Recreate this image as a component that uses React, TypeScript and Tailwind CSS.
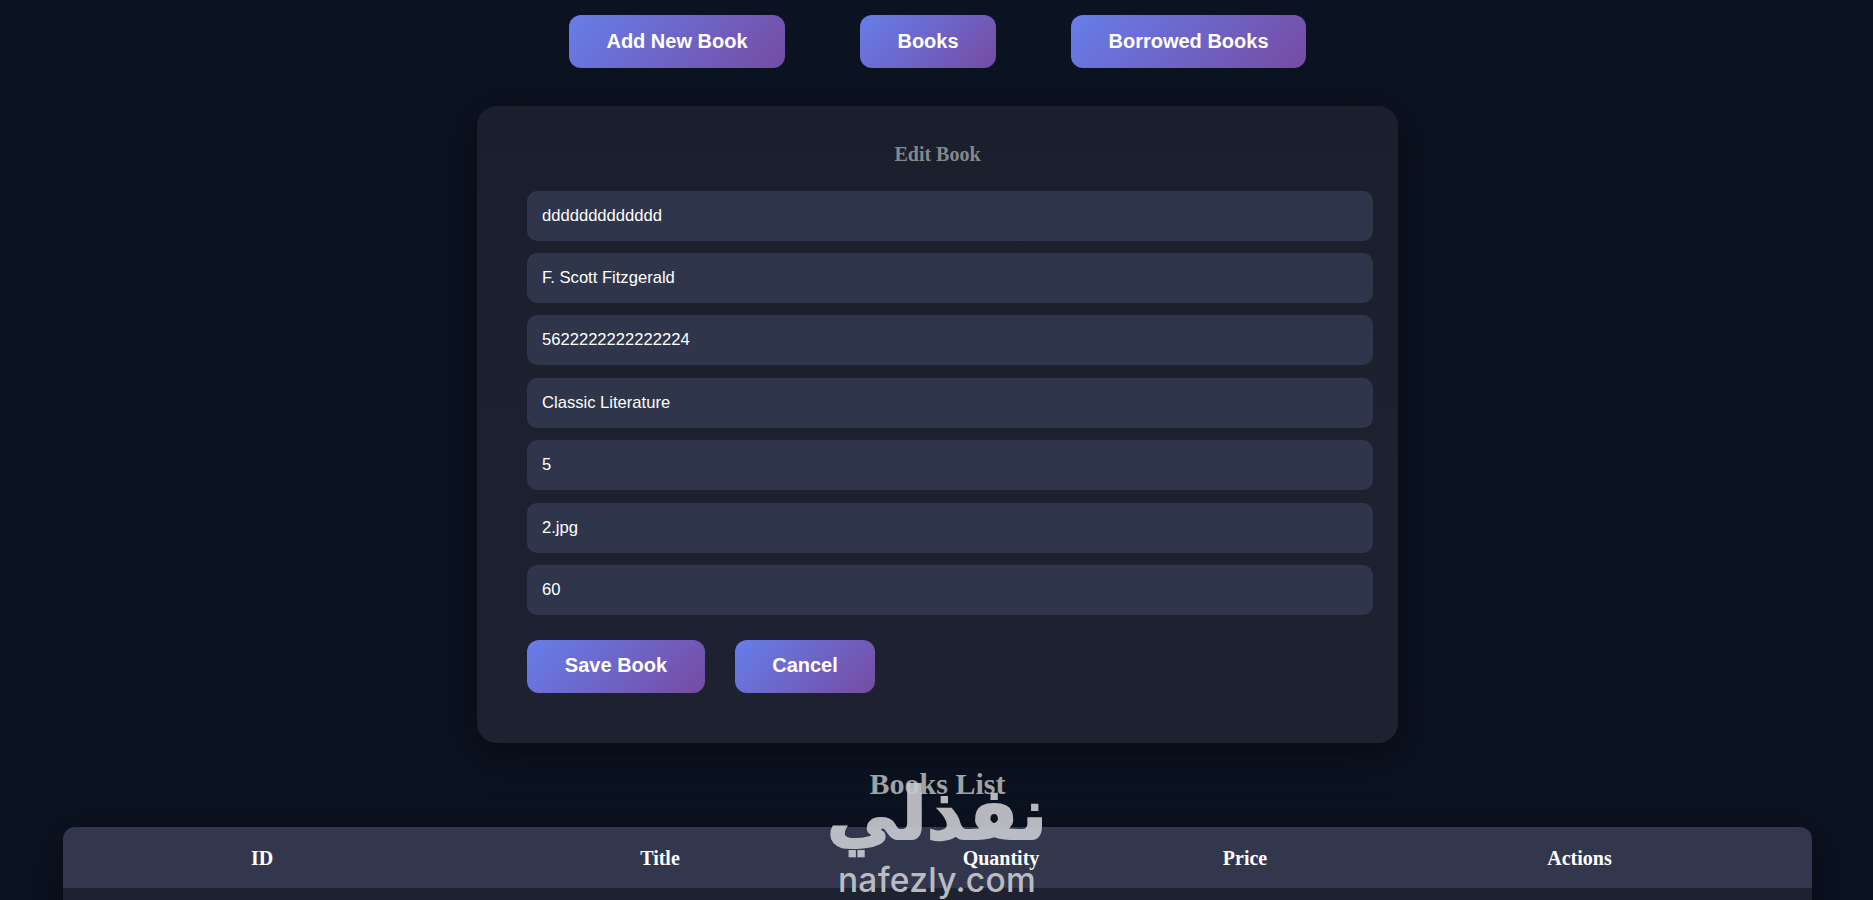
import React from "react";

const sans = "font-['Liberation_Sans',Arial,sans-serif]";
const serif = "font-['Liberation_Serif','Times_New_Roman',serif]";

function GradientButton({ label, width }: { label: string; width: string }) {
  return (
    <button
      className={`${width} h-[53px] rounded-[12px] bg-[linear-gradient(135deg,#667eea,#764ba2)] pb-[2px] text-[20px] font-bold text-white ${sans}`}
    >
      {label}
    </button>
  );
}

const values = [
  "ddddddddddddd",
  "F. Scott Fitzgerald",
  "5622222222222224",
  "Classic Literature",
  "5",
  "2.jpg",
  "60",
];

const columns = [
  { label: "ID", width: "w-[398px]" },
  { label: "Title", width: "w-[398px]" },
  { label: "Quantity", width: "w-[284px]" },
  { label: "Price", width: "w-[204px]" },
  { label: "Actions", width: "w-[465px]" },
];

function Watermark() {
  return (
    <div className="pointer-events-none absolute left-[817px] top-[780px] flex h-[120px] w-[240px] flex-col items-center text-[#c9cbd0] opacity-90">
      <div
        dir="rtl"
        className="h-[68px] whitespace-nowrap font-['DejaVu_Sans',sans-serif] text-[72px] font-bold leading-[68px] [-webkit-text-stroke:2px_#c9cbd0]"
      >
        نفذلي
      </div>
      <div className="mt-[12px] whitespace-nowrap font-['Inter',sans-serif] text-[33.5px] font-medium leading-[40px] tracking-[0.3px]">
        nafezly.com
      </div>
    </div>
  );
}

export default function App() {
  return (
    <div className="relative h-[900px] overflow-hidden bg-[#0b1220]">
      <nav className="flex justify-center gap-[75px] pl-[2px] pt-[15px]">
        <GradientButton label="Add New Book" width="w-[216px]" />
        <GradientButton label="Books" width="w-[136px]" />
        <GradientButton label="Borrowed Books" width="w-[235px]" />
      </nav>

      <section className="mx-auto mt-[38px] h-[637px] w-[921px] translate-x-[1px] rounded-[20px] bg-gradient-to-b from-[#1a1f2e] to-[#1e2130] px-[50px] pt-[38px] shadow-[0_10px_40px_rgba(0,0,0,0.4)]">
        <h2 className={`mb-[25.6px] text-center text-[20px] font-bold leading-[21px] text-[#85878c] ${serif}`}>
          Edit Book
        </h2>
        <div className="flex flex-col gap-[12.4px]">
          {values.map((v) => (
            <input
              key={v}
              readOnly
              defaultValue={v}
              className={`h-[50px] w-[846px] rounded-[10px] bg-[#2f354a] px-[15px] text-[16.6px] text-white outline-none ${sans}`}
            />
          ))}
        </div>
        <div className="mt-[25px] flex gap-[30px]">
          <GradientButton label="Save Book" width="w-[178px]" />
          <GradientButton label="Cancel" width="w-[140px]" />
        </div>
      </section>

      <h2 className={`mt-[24px] translate-x-[1px] text-center text-[30px] font-bold leading-[34px] text-[#a0a2a6] ${serif}`}>
        Books List
      </h2>

      <div className="ml-[63px] mt-[26px] w-[1749px] overflow-hidden rounded-[12px] shadow-[0_10px_40px_rgba(0,0,0,0.4)]">
        <table className={`w-full table-fixed border-collapse ${serif}`}>
          <thead>
            <tr className="h-[61px] bg-[#32374d]">
              {columns.map((c) => (
                <th key={c.label} className={`${c.width} text-center text-[20px] font-bold text-white`}>
                  {c.label}
                </th>
              ))}
            </tr>
          </thead>
          <tbody>
            <tr className="h-[60px] bg-[#1e2130]">
              <td colSpan={5} />
            </tr>
          </tbody>
        </table>
      </div>

      <Watermark />
    </div>
  );
}
